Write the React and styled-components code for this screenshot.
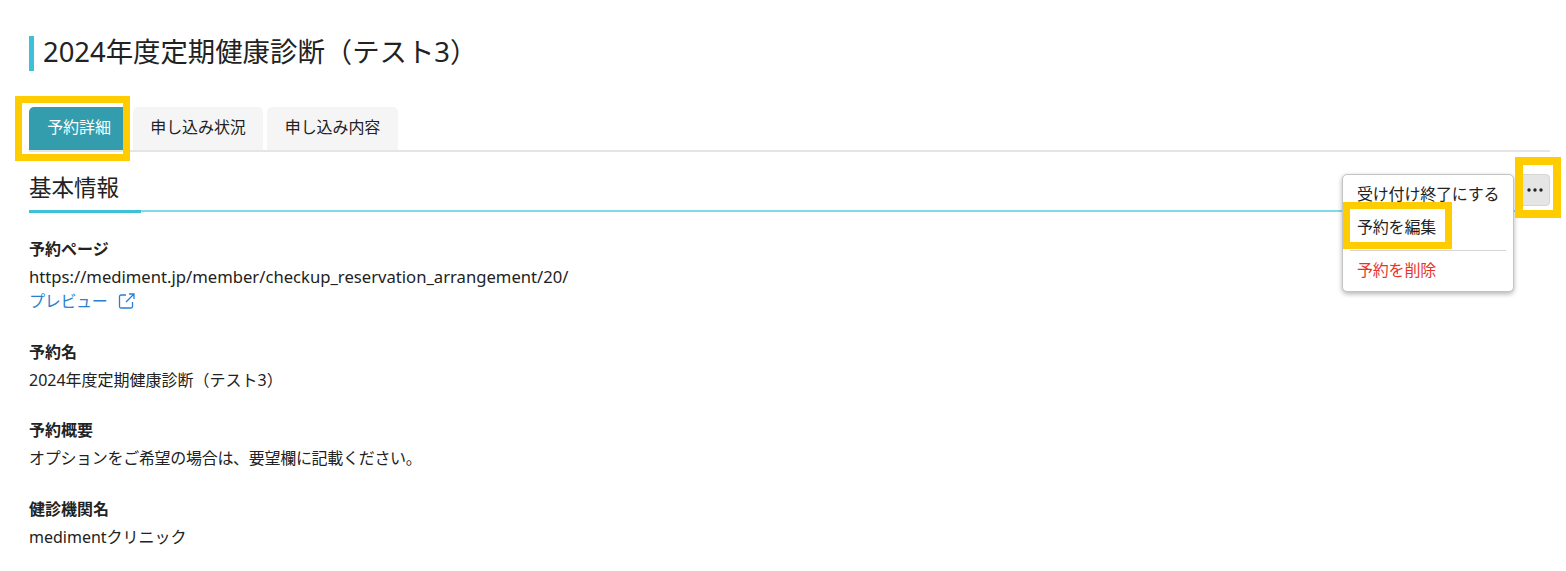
import React from 'react';
import styled, { createGlobalStyle } from 'styled-components';

const GlobalStyle = createGlobalStyle`
  html, body {
    margin: 0;
    padding: 0;
    background: #fff;
    color: #222;
    font-family: "Noto Sans", "Noto Sans CJK JP", sans-serif;
  }
`;

const Page = styled.div`
  position: relative;
  width: 1566px;
  height: 571px;
  padding: 36px 16px 0 29px;
  box-sizing: border-box;
  overflow: hidden;
`;

const Title = styled.h1`
  margin: 0;
  height: 35px;
  padding-left: 9px;
  border-left: 5px solid #3cc1d8;
  font-size: 27.4px;
  font-weight: 400;
  line-height: 31px;
  color: #222;
`;

const Tabs = styled.div`
  display: flex;
  gap: 4px;
  margin-top: 36px;
  height: 43px;
  border-bottom: 2px solid #e5e5e5;
`;

const Tab = styled.div`
  width: ${(p) => p.$width}px;
  height: 43px;
  box-sizing: border-box;
  padding-bottom: 5px;
  display: flex;
  align-items: center;
  justify-content: center;
  border-radius: 5px 5px 0 0;
  font-size: 16px;
  letter-spacing: -0.1px;
  background: ${(p) => (p.$active ? '#339dae' : '#f5f5f5')};
  color: ${(p) => (p.$active ? '#fff' : '#222')};
`;

const SectionHead = styled.div`
  position: relative;
  height: 60px;
  border-bottom: 2px solid #7fdbe8;
  box-sizing: border-box;
  padding-top: 20px;
  font-size: 22.5px;
  line-height: 32px;

  &::after {
    content: '';
    position: absolute;
    left: 0;
    bottom: -3px;
    width: 112px;
    height: 3px;
    background: #3cc1d8;
  }
`;

const Field = styled.div`
  margin-top: ${(p) => p.$top}px;
  font-size: 16px;
  line-height: 24px;
`;

const Label = styled.div`
  font-weight: 700;
  font-size: 16px;
`;

const Value = styled.div`
  margin-top: 4px;
  font-size: ${(p) => p.$size || 16}px;
  letter-spacing: ${(p) => p.$tight || 0}px;
`;

const Preview = styled.a`
  display: flex;
  align-items: center;
  gap: 10px;
  color: #2a7fd0;
  font-size: 16px;
  letter-spacing: -0.3px;
`;

const MoreButton = styled.button`
  position: absolute;
  left: 1519px;
  top: 174px;
  width: 31px;
  height: 32px;
  padding: 0;
  border: 1px solid #d5d5d5;
  border-radius: 4px;
  background: #e5e5e5;
  color: #222;
  display: flex;
  align-items: center;
  justify-content: center;
`;

const Menu = styled.div`
  position: absolute;
  left: 1342px;
  top: 174px;
  width: 172px;
  height: 118px;
  box-sizing: border-box;
  padding-top: 3px;
  background: #fff;
  border: 1px solid #c4c4c4;
  border-radius: 5px;
  box-shadow: 0 2px 5px rgba(0, 0, 0, 0.3);
  font-size: 16px;
  letter-spacing: -0.2px;
`;

const MenuItem = styled.div`
  height: 33px;
  padding-left: 14px;
  line-height: 33px;
  color: ${(p) => (p.$danger ? '#e8332a' : '#222')};
`;

const MenuLine = styled.div`
  height: 1px;
  margin: 6px 7px 3px;
  background: #d5d5d5;
`;

const Highlight = styled.div`
  position: absolute;
  left: ${(p) => p.$x}px;
  top: ${(p) => p.$y}px;
  width: ${(p) => p.$w}px;
  height: ${(p) => p.$h}px;
  box-sizing: border-box;
  border: ${(p) => p.$border || 7}px solid #ffcc00;
  pointer-events: none;
`;

export default function App() {
  return (
    <Page>
      <GlobalStyle />
      <Title>2024年度定期健康診断（テスト3）</Title>
      <Tabs>
        <Tab $active $width={100}>予約詳細</Tab>
        <Tab $width={130}>申し込み状況</Tab>
        <Tab $width={131}>申し込み内容</Tab>
      </Tabs>
      <SectionHead>基本情報</SectionHead>
      <Field $top={25}>
        <Label>予約ページ</Label>
        <Value $size={16.65}>https://mediment.jp/member/checkup_reservation_arrangement/20/</Value>
        <Preview>
          プレビュー
          <svg width="18" height="18" viewBox="0 0 18 18" fill="none" stroke="#2a7fd0" strokeWidth="1.3">
            <path d="M8 3H3a1.5 1.5 0 0 0-1.5 1.5v10A1.5 1.5 0 0 0 3 16h10a1.5 1.5 0 0 0 1.5-1.5V10" />
            <path d="M11 2h5v5M16 2L8 10" />
          </svg>
        </Preview>
      </Field>
      <Field $top={27}>
        <Label>予約名</Label>
        <Value>2024年度定期健康診断（テスト3）</Value>
      </Field>
      <Field $top={26}>
        <Label>予約概要</Label>
        <Value $tight={-0.3}>オプションをご希望の場合は、要望欄に記載ください。</Value>
      </Field>
      <Field $top={27}>
        <Label>健診機関名</Label>
        <Value>medimentクリニック</Value>
      </Field>
      <Menu>
        <MenuItem>受け付け終了にする</MenuItem>
        <MenuItem>予約を編集</MenuItem>
        <MenuLine />
        <MenuItem $danger>予約を削除</MenuItem>
      </Menu>
      <MoreButton aria-label="more">
        <svg width="18" height="4" viewBox="0 0 18 4" fill="#222">
          <circle cx="3" cy="2" r="1.7" />
          <circle cx="9" cy="2" r="1.7" />
          <circle cx="15" cy="2" r="1.7" />
        </svg>
      </MoreButton>
      <Highlight $x={15} $y={96} $w={115} $h={65} />
      <Highlight $x={1343} $y={202} $w={109} $h={47} />
      <Highlight $x={1515} $y={157} $w={46} $h={61} $border={8} />
    </Page>
  );
}
